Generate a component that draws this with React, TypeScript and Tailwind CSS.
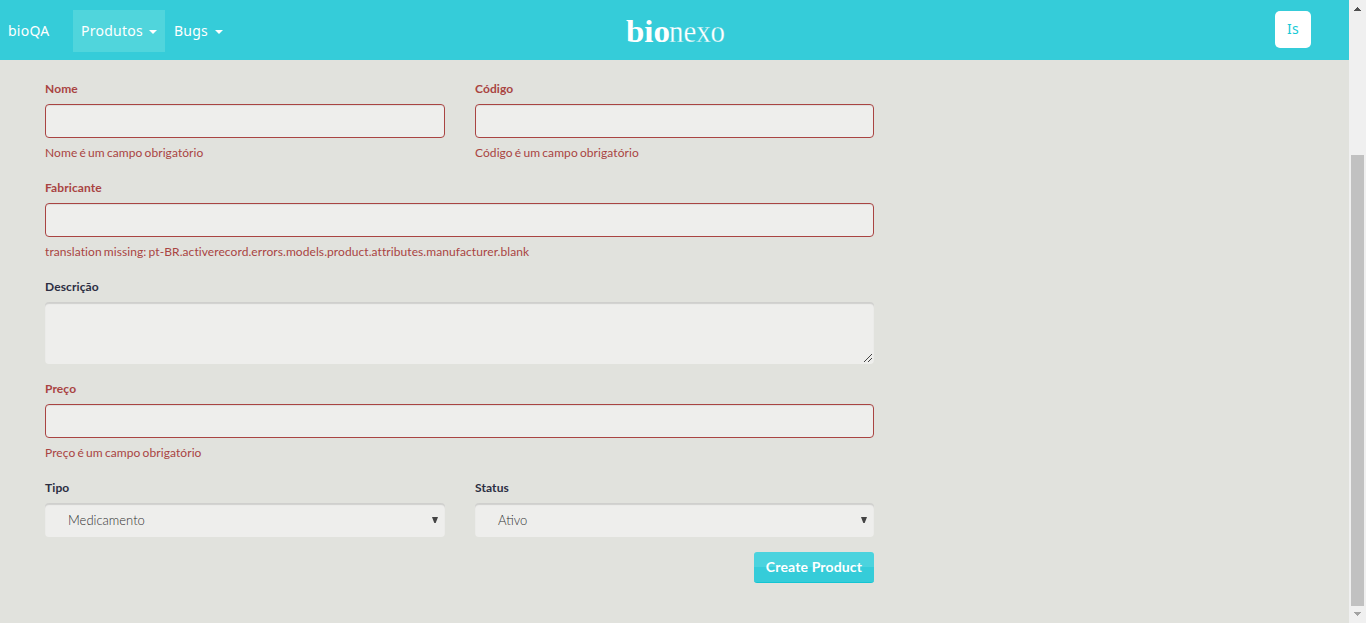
import React from "react";

type FieldProps = { label: string; error?: string; className?: string; children?: React.ReactNode };

function Field({ label, error, className = "", children }: FieldProps) {
  return (
    <div className={`flex flex-col ${className}`}>
      <label className={`h-[18px] text-[12px] font-bold leading-[18px] tracking-[0.1px] ${error ? "text-[#a94442]" : "text-[#2c2e42]"}`}>
        {label}
      </label>
      <div className="mt-[6px] flex flex-col">
        {children ?? (
          <input
            type="text"
            className="h-[34px] w-full rounded border border-[#a94442] bg-[#eeeeec] px-3 shadow-[inset_0_1px_1px_rgba(0,0,0,0.075)] outline-none"
          />
        )}
      </div>
      {error && (
        <p className="mt-[6px] h-[18px] whitespace-nowrap text-[12px] leading-[18px] tracking-[0.078px] text-[#a94442] [word-spacing:-1px]">
          {error}
        </p>
      )}
    </div>
  );
}

function Select({ value }: { value: string }) {
  return (
    <button className="flex h-[34px] w-full items-center justify-between rounded bg-[#eeeeec] pl-[23px] pr-[7px] pt-[2px] text-[13px] font-light text-[#333] shadow-[inset_0_2px_1px_rgba(0,0,0,0.13)]">
      <span>{value}</span>
      <svg width="6" height="6" viewBox="0 0 6 6" className="mb-[3px]">
        <path d="M0 0h6L3.7 6H2.3z" fill="#444" />
      </svg>
    </button>
  );
}

function Caret() {
  return <span className="mt-[4px] h-0 w-0 border-x-4 border-t-4 border-x-transparent border-t-white" />;
}

export default function App() {
  return (
    <div className="flex h-[623px] w-[1366px] overflow-hidden bg-[#e1e2dd] font-['Lato',sans-serif]">
      <div className="flex w-[1349px] flex-col">
        <header className="grid h-[60px] grid-cols-[1fr_100px_1fr] items-center bg-[#35ccd9] font-['Noto_Sans',sans-serif] text-[14px] text-white">
          <nav className="mt-[10px] flex h-[42px] items-center self-start pl-2 tracking-[0.25px]">
            <a className="w-[65px] pb-[2px]">bioQA</a>
            <a className="flex h-[42px] w-[92px] items-center justify-between bg-[#50d5dc] px-2 pb-[2px]">
              Produtos <Caret />
            </a>
            <a className="flex h-[42px] w-[58px] items-center justify-between pb-[2px] pl-[9px]">
              Bugs <Caret />
            </a>
          </nav>
          <svg width="100" height="50" viewBox="0 0 100 50" fill="white" className="overflow-visible font-['Liberation_Serif',serif]">
            <text x="1" y="36.5" fontSize="31" fontWeight="700" textLength="44" lengthAdjust="spacingAndGlyphs">bio</text>
            <text x="44" y="36.5" fontSize="31" stroke="#35ccd9" strokeWidth="0.3" textLength="56" lengthAdjust="spacingAndGlyphs">nexo</text>
          </svg>
          <div className="mr-[38px] mt-[11px] flex h-[37px] w-9 items-center justify-center self-start justify-self-end rounded-[5px] bg-white pb-[2px] text-[14px] tracking-[0.3px] text-[#17c9d6]">
            Is
          </div>
        </header>
        <main className="ml-[45px] mt-5 w-[829px]">
          <div className="grid h-[99px] grid-cols-[400px_399px] gap-x-[30px]">
            <Field label="Nome" error="Nome é um campo obrigatório" />
            <Field label="Código" error="Código é um campo obrigatório" />
          </div>
          <Field
            className="h-[99px]"
            label="Fabricante"
            error="translation missing: pt-BR.activerecord.errors.models.product.attributes.manufacturer.blank"
          />
          <Field className="h-[102px]" label="Descrição">
            <div className="flex h-[62px] items-end justify-end rounded bg-[#eeeeec] pb-[2px] pr-[2px] shadow-[inset_0_2px_1px_rgba(0,0,0,0.13)]">
              <svg width="8" height="8" viewBox="0 0 8 8" stroke="#444" strokeWidth="1">
                <path d="M0 8L8 0M4 8L8 4" />
              </svg>
            </div>
          </Field>
          <Field className="h-[99px]" label="Preço" error="Preço é um campo obrigatório" />
          <div className="grid h-[73px] grid-cols-[400px_399px] gap-x-[30px]">
            <Field label="Tipo">
              <Select value="Medicamento" />
            </Field>
            <Field label="Status">
              <Select value="Ativo" />
            </Field>
          </div>
          <div className="flex justify-end">
            <button className="h-[31px] w-[120px] rounded-[3px] border-b border-[#14c5d2] bg-[linear-gradient(#4bd3de_50%,#35ccd9_50%)] pb-[2px] text-[14px] font-bold tracking-[0.15px] text-white">
              Create Product
            </button>
          </div>
        </main>
      </div>
      <div className="flex w-[17px] flex-col items-center bg-[#f0f0f0]">
        <svg width="7" height="4" viewBox="0 0 7 4" className="mt-[7px]" shapeRendering="crispEdges">
          <path d="M3 0h1v1h1v1h1v1h1v1H0V3h1V2h1V1h1z" fill="#505050" />
        </svg>
        <div className="mt-[144px] h-[451px] w-[13px] bg-[#c1c1c1]" />
        <svg width="7" height="4" viewBox="0 0 7 4" className="mt-[6px]" shapeRendering="crispEdges">
          <path d="M0 0h7v1H6v1H5v1H4v1H3V3H2V2H1V1H0z" fill="#a3a3a3" />
        </svg>
      </div>
    </div>
  );
}
